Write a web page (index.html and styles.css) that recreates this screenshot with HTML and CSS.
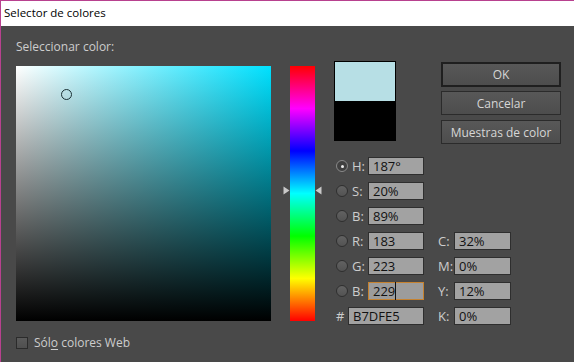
FILE: index.html
```html
<!DOCTYPE html>
<html lang="es">
<head>
    <meta charset="UTF-8">
    <title>Selector de colores</title>
    <link rel="stylesheet" href="styles.css">
</head>
<body>
    <div class="window">
        <div class="titlebar">Selector de colores</div>
        <div class="dialog">
            <div class="heading">Seleccionar color:</div>
            <div class="main">
                <div class="field">
                    <div class="marker"></div>
                </div>
                <div class="hue">
                    <svg class="arrow arrow-left" width="7" height="9" viewBox="0 0 7 9"><polygon points="0.5,0.5 6.5,4.5 0.5,8.5" fill="#c9c9c9"/></svg>
                    <svg class="arrow arrow-right" width="7" height="9" viewBox="0 0 7 9"><polygon points="6.5,0.5 0.5,4.5 6.5,8.5" fill="#c9c9c9"/></svg>
                </div>
                <div class="side">
                    <div class="top-row">
                        <div class="swatch">
                            <div class="swatch-new"></div>
                            <div class="swatch-old"></div>
                        </div>
                        <div class="buttons">
                            <button class="btn btn-default">OK</button>
                            <button class="btn">Cancelar</button>
                            <button class="btn">Muestras de color</button>
                        </div>
                    </div>
                    <div class="values">
                        <span class="radio checked"></span><span class="lbl">H:</span><div class="box">187°</div>
                        <span></span><span></span><span></span>

                        <span class="radio"></span><span class="lbl">S:</span><div class="box">20%</div>
                        <span></span><span></span><span></span>

                        <span class="radio"></span><span class="lbl">B:</span><div class="box">89%</div>
                        <span></span><span></span><span></span>

                        <span class="radio"></span><span class="lbl">R:</span><div class="box">183</div>
                        <span></span><span class="lbl">C:</span><div class="box">32%</div>

                        <span class="radio"></span><span class="lbl">G:</span><div class="box">223</div>
                        <span></span><span class="lbl">M:</span><div class="box">0%</div>

                        <span class="radio"></span><span class="lbl">B:</span><div class="box focused"><span class="caret">229</span></div>
                        <span></span><span class="lbl">Y:</span><div class="box">12%</div>

                        <span class="lbl hash">#</span><div class="box hex">B7DFE5</div>
                        <span></span><span class="lbl">K:</span><div class="box">0%</div>
                    </div>
                </div>
            </div>
            <div class="web-only">
                <span class="checkbox"></span>
                <span class="web-label">Sól<u>o</u> colores Web</span>
            </div>
        </div>
    </div>
</body>
</html>
```

FILE: styles.css
```css
body {
    margin: 0;
    padding: 0;
    font-family: "Open Sans", "Liberation Sans", sans-serif;
    font-size: 12px;
    overflow: hidden;
}
.window {
    width: 574px;
    height: 362px;
    box-sizing: border-box;
    border-top: 1px solid #b8418f;
    border-left: 1px solid #b8418f;
    display: flex;
    flex-direction: column;
}
.titlebar {
    height: 25px;
    line-height: 24px;
    background: #fff;
    color: #000;
    padding-left: 3px;
    font-size: 11.5px;
}
.dialog {
    flex: 1;
    background: #494949;
    padding-left: 15px;
    color: #cdcdcd;
}
.heading {
    padding-top: 13px;
    line-height: 16px;
    height: 16px;
}
.main {
    display: flex;
    align-items: flex-start;
    margin-top: 6px;
}
.field {
    position: relative;
    width: 255px;
    height: 255px;
    margin-top: 5px;
    background:
        linear-gradient(to top, #000, rgba(0, 0, 0, 0)),
        linear-gradient(to right, #fff, rgb(0, 225, 255));
}
.marker {
    position: absolute;
    left: 45px;
    top: 23px;
    width: 9px;
    height: 9px;
    border: 1.5px solid #1b3135;
    border-radius: 50%;
}
.hue {
    position: relative;
    width: 25px;
    height: 255px;
    margin-top: 5px;
    margin-left: 19px;
    background: linear-gradient(to bottom, #f00, #f0f 16.7%, #00f 33.3%, #0ff 50%, #0f0 66.7%, #ff0 83.3%, #f00);
}
.arrow { position: absolute; top: 120px; }
.arrow-left { left: -7px; }
.arrow-right { right: -7px; }
.side {
    margin-left: 19px;
}
.top-row {
    display: flex;
    align-items: flex-start;
}
.swatch {
    width: 60px;
    height: 78px;
    border: 1px solid #000;
}
.swatch-new { height: 39px; background: #b7dfe5; }
.swatch-old { height: 39px; background: #000; }
.buttons {
    display: flex;
    flex-direction: column;
    margin-left: 45px;
    margin-top: 1px;
    width: 120px;
}
.btn {
    height: 24px;
    margin-top: 5px;
    padding: 0;
    border: 1px solid #2b2b2b;
    background: linear-gradient(#585858, #4d4d4d);
    color: #d6d6d6;
    font-family: inherit;
    font-size: 12px;
}
.btn-default {
    height: 25px;
    margin-top: 0;
    border: 2px solid #1f1f1f;
}
.btn-default + .btn { margin-top: 4px; }
.values {
    display: grid;
    grid-template-columns: 18px 16px 56px 14px 16px 57px;
    grid-auto-rows: 18px;
    row-gap: 7px;
    margin-top: 13px;
    align-items: center;
    font-size: 13px;
}
.radio {
    display: block;
    box-sizing: border-box;
    width: 12px;
    height: 12px;
    margin-left: 2px;
    border-radius: 50%;
    border: 1px solid #2f2f2f;
    background: linear-gradient(#626262, #535353);
    position: relative;
}
.radio.checked {
    border-color: #8a8a8a;
    background: #404040;
}
.radio.checked::after {
    content: "";
    position: absolute;
    left: 3.5px;
    top: 3.5px;
    width: 3px;
    height: 3px;
    border-radius: 50%;
    background: #eee;
}
.lbl { line-height: 18px; }
.hash { padding-left: 2px; }
.box {
    height: 16px;
    line-height: 16px;
    border: 1px solid #2e2e2e;
    background: #a2a2a2;
    color: #111;
    padding-left: 4px;
}
.box.focused {
    border-color: #c6822f;
    background: #9c9c9c;
}
.caret { border-right: 1px solid #111; }
.box.hex {
    grid-column: 2 / 4;
    margin-left: -4px;
}
.web-only {
    display: flex;
    align-items: center;
    margin-top: 9px;
    font-size: 12px;
}
.checkbox {
    width: 10px;
    height: 10px;
    border: 1px solid #2b2b2b;
    background: linear-gradient(#5a5a5a, #4f4f4f);
}
.web-label { margin-left: 6px; }
.web-label u { text-underline-offset: 2px; }
```
